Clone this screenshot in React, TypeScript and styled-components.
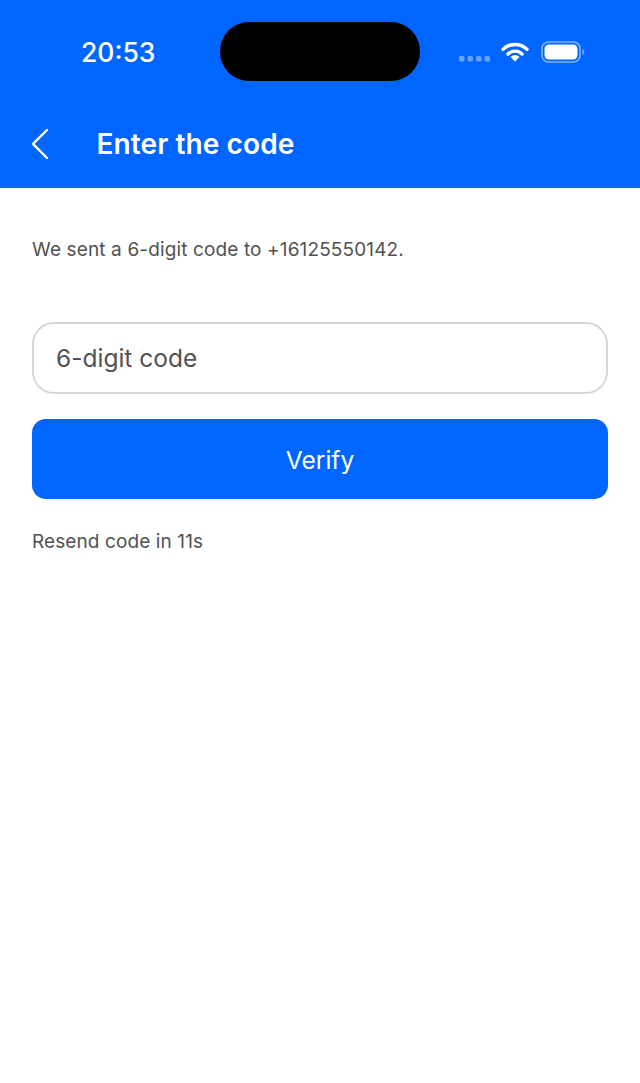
import { createGlobalStyle, styled } from "styled-components";

const GlobalStyle = createGlobalStyle`
  html, body {
    margin: 0;
    padding: 0;
    background: #fff;
    font-family: "Inter", "Liberation Sans", sans-serif;
  }
`;

const Page = styled.div`
  width: 640px;
  height: 1083px;
  background: #fff;
  overflow: hidden;
`;

const Header = styled.header`
  height: 188px;
  box-sizing: border-box;
  background: #0066ff;
  display: flex;
  flex-direction: column;
`;

const StatusBar = styled.div`
  height: 81px;
  padding-top: 22px;
  box-sizing: border-box;
  display: grid;
  grid-template-columns: 220px 200px 220px;
`;

const Clock = styled.div`
  padding: 15px 0 0 81px;
  color: #fff;
  font-size: 26.5px;
  line-height: 30px;
  font-weight: 500;
`;

const Island = styled.div`
  height: 59px;
  background: #000;
  border-radius: 29px;
`;

const StatusIcons = styled.div`
  display: flex;
  align-items: flex-start;
  padding: 23px 0 0 39px;
`;

const NavBar = styled.div`
  display: flex;
  align-items: center;
  height: 54px;
  margin-top: 36px;
  padding-left: 30px;
`;

const BackButton = styled.button`
  width: 66.5px;
  height: 54px;
  padding: 0;
  background: none;
  border: none;
  display: flex;
  align-items: center;
`;

const Title = styled.h1`
  margin: 0;
  color: #fff;
  font-size: 28px;
  line-height: 34px;
  font-weight: 600;
  letter-spacing: 0.1px;
`;

const Content = styled.main`
  display: flex;
  flex-direction: column;
  padding: 48px 32px 0;
`;

const Hint = styled.p`
  margin: 0;
  color: #525252;
  font-size: 19px;
  line-height: 27px;
  letter-spacing: 0.13px;
`;

const CodeInput = styled.input`
  height: 72px;
  margin-top: 59px;
  padding: 0 22px;
  box-sizing: border-box;
  width: 100%;
  border: 2px solid #d6d6d6;
  border-radius: 22px;
  outline: none;
  font-family: inherit;
  font-size: 24.5px;
  color: #525252;
  &::placeholder {
    color: #525252;
    opacity: 1;
  }
`;

const VerifyButton = styled.button`
  height: 80px;
  margin-top: 25px;
  padding: 2px 0 0;
  border: none;
  border-radius: 14px;
  background: #0066ff;
  color: #fff;
  font-family: inherit;
  font-size: 24.5px;
  font-weight: 400;
`;

const Resend = styled(Hint)`
  margin-top: 29px;
  letter-spacing: 0.1px;
`;

const Signal = () => (
  <svg width="32" height="8" viewBox="0 0 32 8" style={{ marginTop: 10 }}>
    {[0, 8.5, 17, 25.5].map((x) => (
      <rect key={x} x={x} y="1" width="5.5" height="5.5" rx="1.5" fill="#fff" opacity="0.4" />
    ))}
  </svg>
);

const Wifi = () => (
  <svg width="28" height="21" viewBox="0 0 28 21" style={{ marginLeft: 10, marginTop: -4 }}>
    <path d="M2 8.4a17 17 0 0 1 24 0" fill="none" stroke="#fff" strokeWidth="3.4" strokeLinecap="round" />
    <path d="M7 13a10 10 0 0 1 14 0" fill="none" stroke="#fff" strokeWidth="3.4" strokeLinecap="round" />
    <path d="M14 20.5l-4.5-4.6a6.4 6.4 0 0 1 9 0z" fill="#fff" />
  </svg>
);

const Battery = () => (
  <svg width="44" height="22" viewBox="0 0 44 22" style={{ marginLeft: 12, marginTop: -4 }}>
    <rect x="1" y="1" width="38" height="20" rx="6.5" fill="none" stroke="#fff" strokeOpacity="0.5" strokeWidth="1.6" />
    <rect x="3.5" y="3.5" width="33" height="15" rx="4.5" fill="#fff" />
    <path d="M41.5 8v6c1-.4 1.6-1.6 1.6-3s-.6-2.6-1.6-3z" fill="#fff" fillOpacity="0.5" />
  </svg>
);

const App = () => {
  return (
    <Page>
      <GlobalStyle />
      <Header>
        <StatusBar>
          <Clock>20:53</Clock>
          <Island />
          <StatusIcons>
            <Signal />
            <Wifi />
            <Battery />
          </StatusIcons>
        </StatusBar>
        <NavBar>
          <BackButton aria-label="Back">
            <svg width="20" height="32" viewBox="0 0 20 32">
              <path d="M17 2L3 15.8 17 30" fill="none" stroke="#fff" strokeWidth="2.4" strokeLinecap="round" strokeLinejoin="round" />
            </svg>
          </BackButton>
          <Title>Enter the code</Title>
        </NavBar>
      </Header>
      <Content>
        <Hint>We sent a 6-digit code to +16125550142.</Hint>
        <CodeInput placeholder="6-digit code" />
        <VerifyButton>Verify</VerifyButton>
        <Resend>Resend code in 11s</Resend>
      </Content>
    </Page>
  );
};

export default App;
